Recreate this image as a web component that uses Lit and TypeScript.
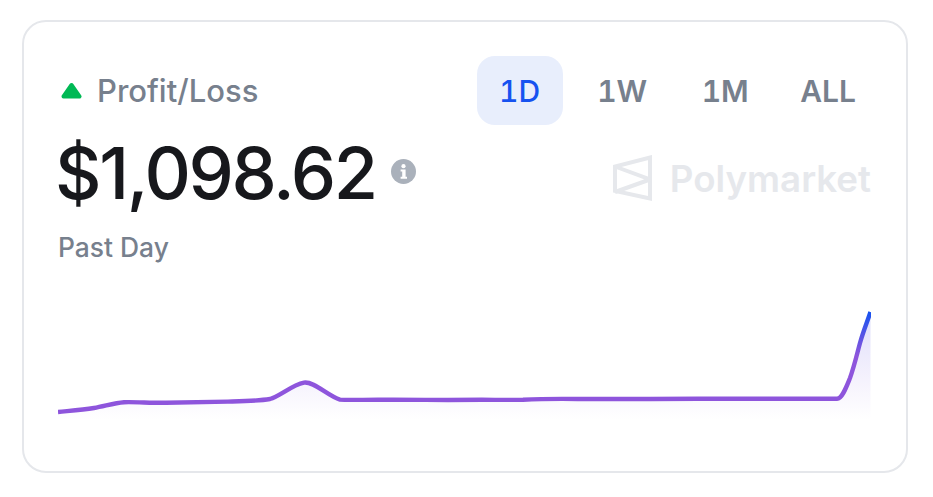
import { LitElement, html, css, svg } from "lit";
import { customElement } from "lit/decorators.js";

const LINE =
  "M0 118 C12 116.8 24 116 36 114 C46 112.4 56 109 66 108.2 C78 107.8 92 109 108 108.8 C130 108.2 150 108 170 107.6 C185 107.2 200 107 212 105 C222 102 234 91 246 88.6 C256 87.2 270 102 282 105.6 C284 106 300 105.8 320 105.8 C350 105.6 370 106 390 106 C420 105.6 445 106 465 105.8 C480 105 490 104.6 520 105 C560 105.2 600 104.8 640 104.8 C680 104.8 730 104.8 779 104.8 C784 104.6 788 94 792 84 C796 73 799 60 802 49 C805 38 808 31 812.5 18";

@customElement("app-root")
export class AppRoot extends LitElement {
  static styles = css`
    :host {
      display: block;
      font-family: Inter, "Noto Sans", sans-serif;
      background: #fff;
      height: 497px;
      box-sizing: border-box;
      padding: 20px 25px 0 22px;
    }
    .card {
      box-sizing: border-box;
      height: 453px;
      border: 2px solid #e5e7eb;
      border-radius: 24px;
      padding: 34px 35px 0 34px;
      display: flex;
      flex-direction: column;
    }
    .top {
      display: flex;
      justify-content: space-between;
      align-items: center;
      height: 69px;
    }
    .title {
      display: flex;
      align-items: center;
      gap: 15px;
      padding-left: 3px;
      font-size: 31px;
      font-weight: 500;
      color: #77808d;
    }
    .tri { width: 21px; height: 18px; display: block; }
    .tabs { display: flex; align-items: center; font-variant-numeric: tabular-nums; }
    .tab {
      height: 69px;
      padding: 0 23px;
      display: flex;
      align-items: center;
      border-radius: 18px;
      font-size: 30px;
      font-weight: 600;
      color: #77808d;
      margin-left: 8.5px;
    }
    .tab.on {
      background: #e8eefc;
      color: #1652f0;
      font-weight: 550;
      padding: 0 22.5px;
      margin-right: 3px;
      margin-left: 0;
    }
    .tab.last { padding-right: 15px; margin-left: 5.5px; }
    .mid {
      display: flex;
      justify-content: space-between;
      align-items: center;
      height: 90px;
      margin-top: 3px;
    }
    .amount { display: flex; align-items: center; gap: 15px; }
    .value {
      font-size: 72px;
      font-weight: 500;
      color: #17181c;
      letter-spacing: -2.3px;
      line-height: 90px;
      margin-left: -3px;
    }
    .info { width: 25px; height: 25px; display: block; margin-bottom: 3px; }
    .brand {
      display: flex;
      align-items: center;
      gap: 18px;
      font-size: 36.7px;
      font-weight: 600;
      color: #e6e8ec;
      margin-top: 10px;
    }
    .logo { width: 39px; height: 46px; display: block; }
    .sub { font-size: 26.4px; font-weight: 500; color: #77808d; margin-top: 13px; line-height: 32px; }
    .chart { display: block; width: 813px; height: 128px; margin-top: 31px; }
  `;

  render() {
    return html`<div class="card">
      <div class="top">
        <div class="title">
          <svg class="tri" viewBox="0 0 21 18">
            <path d="M10.5 3 L18.5 14.5 H2.5 Z" fill="#00b955" stroke="#00b955" stroke-width="4" stroke-linejoin="round" />
          </svg>
          <span>Profit/Loss</span>
        </div>
        <div class="tabs">
          <div class="tab on">1D</div>
          <div class="tab">1W</div>
          <div class="tab">1M</div>
          <div class="tab last">ALL</div>
        </div>
      </div>
      <div class="mid">
        <div class="amount">
          <span class="value">$1,098.62</span>
          <svg class="info" viewBox="0 0 25 25">
            <circle cx="12.5" cy="12.5" r="12.5" fill="#aab1bb" />
            <circle cx="12.5" cy="7.2" r="2.1" fill="#fff" />
            <path d="M9.6 10.6 H14.6 V17.8 H16 V19.8 H9.6 V17.8 H11.2 V12.6 H9.6 Z" fill="#fff" />
          </svg>
        </div>
        <div class="brand">
          <svg class="logo" viewBox="0 0 39 46" fill="none" stroke="#e6e8ec" stroke-width="4">
            <path d="M37 2.5 V43.5 L2 36 V11.5 Z" />
            <path d="M2 11.5 L37 24.5 L2 37" />
          </svg>
          <span>Polymarket</span>
        </div>
      </div>
      <div class="sub">Past Day</div>
      <svg class="chart" viewBox="0 0 813 128">
        <defs>
          <linearGradient id="stroke" gradientUnits="userSpaceOnUse" x1="0" y1="128" x2="0" y2="18">
            <stop offset="0.6" stop-color="#8e55dc" />
            <stop offset="1" stop-color="#1652f0" />
          </linearGradient>
          <linearGradient id="fill" gradientUnits="userSpaceOnUse" x1="0" y1="18" x2="0" y2="126">
            <stop offset="0" stop-color="#4f56ee" stop-opacity="0.2" />
            <stop offset="1" stop-color="#8e55dc" stop-opacity="0" />
          </linearGradient>
        </defs>
        ${svg`<path d="${LINE} V128 H0 Z" fill="url(#fill)" />
        <path d="${LINE}" fill="none" stroke="url(#stroke)" stroke-width="4.4" />`}
      </svg>
    </div>`;
  }
}
